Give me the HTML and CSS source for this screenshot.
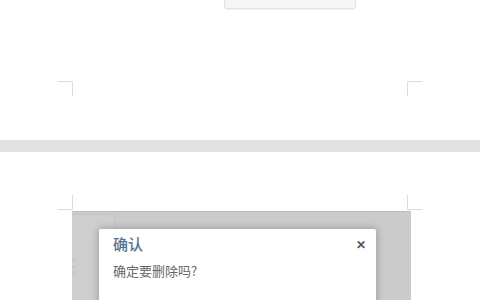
FILE: index.html
```html
<!DOCTYPE html>
<html lang="zh-CN">
<head>
    <meta charset="UTF-8">
    <meta name="viewport" content="width=device-width, initial-scale=1.0">
    <title>确认删除</title>
    <link rel="stylesheet" href="styles.css">
</head>
<body>
    <div class="page page-first">
        <div class="toolbar-box"></div>
        <div class="corner-row corner-row-top">
            <span class="corner corner-tl"></span>
            <span class="corner corner-tr"></span>
        </div>
    </div>

    <div class="page-gap"></div>

    <div class="page page-second">
        <div class="corner-row corner-row-bottom">
            <span class="corner corner-bl"></span>
            <span class="corner corner-br"></span>
        </div>

        <div class="mask-area">
            <div class="bg-tab"></div>
            <div class="bg-dots">
                <i></i><i></i><i></i>
            </div>

            <div class="dialog">
                <div class="dialog-head">
                    <span class="dialog-title">确认</span>
                    <span class="dialog-close">&#x2715;</span>
                </div>
                <div class="dialog-body">确定要删除吗?</div>
            </div>
        </div>
    </div>
</body>
</html>
```

FILE: styles.css
```css
html, body {
    margin: 0;
    padding: 0;
    height: 300px;
    overflow: hidden;
}
body {
    font-family: "Noto Sans CJK SC", "Noto Sans", Arial, sans-serif;
    background: #ffffff;
}
.page-first {
    height: 140px;
}
.toolbar-box {
    margin-left: 224px;
    width: 130px;
    height: 8px;
    background: #f6f6f6;
    border: 1px solid #e2e2e2;
    border-top: none;
    border-radius: 0 0 4px 4px;
    box-shadow: 0 1px 2px rgba(0,0,0,0.06);
}
.corner-row {
    display: flex;
    justify-content: space-between;
    margin-left: 58px;
    width: 364px;
}
.corner-row-top {
    margin-top: 72px;
}
.corner {
    display: block;
    width: 14px;
    height: 14px;
    border: 0 solid #dcdcdc;
}
.corner-tl {
    border-top-width: 1px;
    border-right-width: 1px;
}
.corner-tr {
    border-top-width: 1px;
    border-left-width: 1px;
}
.corner-row-bottom {
    margin-top: 43px;
}
.corner-bl {
    border-bottom-width: 1px;
    border-right-width: 1px;
}
.corner-br {
    border-bottom-width: 1px;
    border-left-width: 1px;
}
.page-gap {
    height: 12px;
    background: #e1e1e3;
}
.mask-area {
    position: relative;
    overflow: hidden;
    margin: 1px 0 0 72px;
    width: 339px;
    height: 88px;
    background: #cbcbcb;
    border-top: 1px solid #bcbcbc;
}
.bg-tab {
    position: absolute;
    left: 0;
    top: 2px;
    width: 42px;
    height: 100px;
    background: #cecece;
    border: 1px solid #c4c4c4;
    border-left: none;
    border-radius: 0 5px 0 0;
}
.bg-dots {
    position: absolute;
    left: 1px;
    top: 47px;
    display: flex;
    flex-direction: column;
    gap: 5px;
}
.bg-dots i {
    display: block;
    width: 1px;
    height: 2px;
    background: #b4b4b4;
}
.dialog {
    position: absolute;
    left: 27px;
    top: 17px;
    width: 277px;
    height: 120px;
    background: #ffffff;
    border-radius: 2px;
    box-shadow: 0 0 9px rgba(0,0,0,0.28);
}
.dialog-head {
    display: flex;
    justify-content: space-between;
    align-items: center;
    padding: 3px 10px 0 14px;
    height: 22px;
}
.dialog-title {
    font-size: 15px;
    color: #56728f;
    font-weight: 500;
}
.dialog-close {
    font-size: 12px;
    font-weight: bold;
    color: #555555;
}
.dialog-body {
    padding: 7px 14px 0;
    font-size: 13px;
    color: #666666;
}
```
